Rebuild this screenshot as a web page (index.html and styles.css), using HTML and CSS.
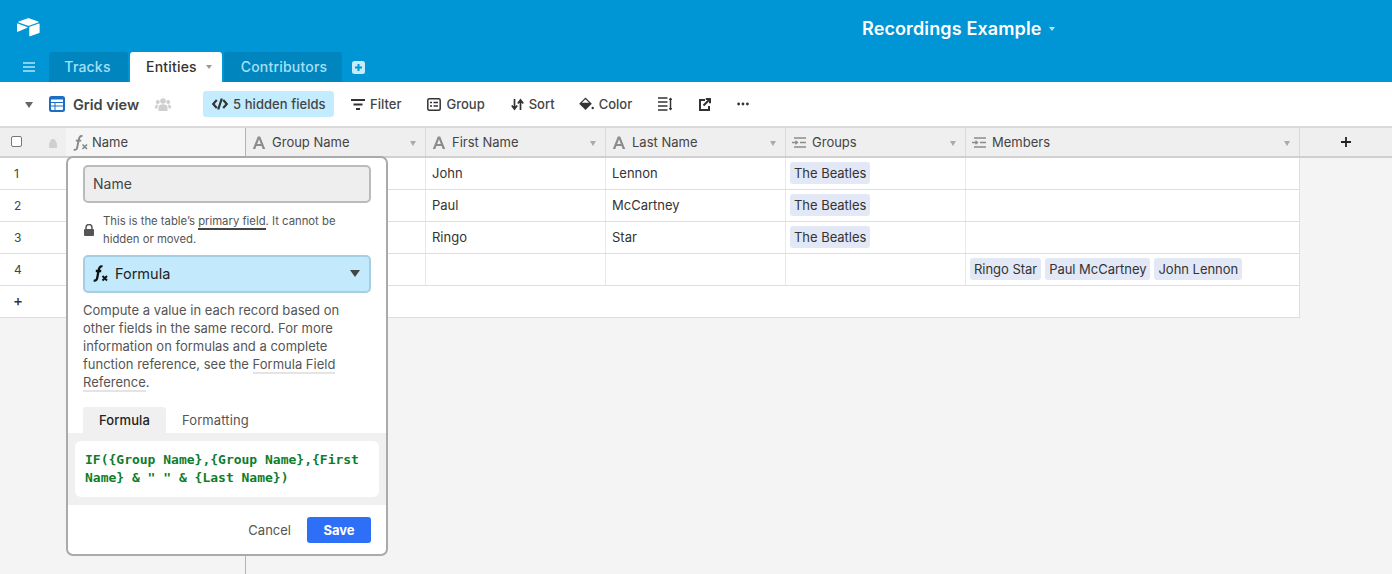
FILE: index.html
```html
<!DOCTYPE html>
<html lang="en">
<head>
<meta charset="utf-8">
<title>Recordings Example</title>
<link rel="stylesheet" href="styles.css">
</head>
<body>
<header class="appbar">
  <div class="titlebar">
    <svg class="logo" width="23" height="19" viewBox="0 0 24 22" preserveAspectRatio="none"><path d="M10.600.5 1.800 4.100c-.5.2-.5.9 0 1.100l8.900 3.500c.8.300 1.700.3 2.500 0l8.900-3.500c.5-.2.5-.9 0-1.100L13.300.5c-.8-.3-1.900-.3-2.700 0z" fill="#fff"/><path d="M12.800 10.800v9.800c0 .5.500.8.900.6l9.500-3.700c.3-.1.400-.3.400-.6V7.100c0-.5-.5-.8-.9-.6l-9.500 3.700c-.3.100-.4.300-.4.600z" fill="#fff"/><path d="M10.700 11.200 1 15.900c-.4.200-1-.1-1-.6V6.800c0-.2.100-.3.200-.4.100-.1.300-.2.500-.1l10 4c.5.200.5.700 0 .9z" fill="#fff"/></svg>
    <div class="basename">Recordings Example<span class="tricaret"></span></div>
  </div>
  <nav class="tabbar">
    <svg class="burger" width="12" height="10" viewBox="0 0 12 10"><path d="M0 1h12M0 5h12M0 9h12" stroke="#b5e5f8" stroke-width="1.600"/></svg>
    <div class="tab tab-first">Tracks</div>
    <div class="tab tab-active">Entities<span class="tab-caret"></span></div>
    <div class="tab tab-wide">Contributors</div>
    <svg class="addtab" width="13" height="13" viewBox="0 0 13 13"><rect width="13" height="13" rx="2.500" fill="#c4ecfb"/><path d="M6.500 3v7M3 6.500h7" stroke="#0095d5" stroke-width="2"/></svg>
  </nav>
</header>

<section class="toolbar">
  <span class="viewcaret"></span>
  <svg class="gridicon" width="16" height="16" viewBox="0 0 16 16"><rect width="16" height="16" rx="2.500" fill="#1a6fc4"/><path d="M2 3.500h12v2.500H2zM2 7h3.500v2.500H2zM6.500 7H14v2.500H6.500zM2 10.500h3.500V14H3a1 1 0 0 1-1-1zM6.500 10.500H14V13a1 1 0 0 1-1 1H6.500z" fill="#fff"/></svg>
  <span class="viewname">Grid view</span>
  <svg class="people" width="16" height="13" viewBox="0 0 16 13"><g fill="#cfcfcf"><circle cx="8" cy="3" r="2.800"/><circle cx="2.800" cy="4" r="2"/><circle cx="13.200" cy="4" r="2"/><path d="M3.500 13V9c0-1.800 2-2.800 4.500-2.800S12.500 7.200 12.500 9v4z"/><path d="M0 10.500V8.500C0 7.200 1.200 6.500 2.800 6.500l.6 0C2.800 7.200 2.500 8 2.500 9v1.500zM16 10.500V8.500c0-1.300-1.200-2-2.800-2l-.6 0c.6.700.9 1.500.9 2.500v1.500z"/></g></svg>
  <button class="tool tool-hidden">
    <svg width="16" height="12" viewBox="0 0 16 12"><path d="M4.800 2 1.200 6l3.600 4M11.200 2l3.600 4-3.600 4M9.800.5 6.200 11.500" fill="none" stroke="#333" stroke-width="2.200"/></svg>
    5 hidden fields
  </button>
  <button class="tool tool-filter">
    <svg width="14" height="11" viewBox="0 0 14 11"><path d="M0 1h14M2.500 5.500h9M5 10h4" stroke="#333" stroke-width="2"/></svg>
    Filter
  </button>
  <button class="tool tool-group">
    <svg width="14" height="13" viewBox="0 0 14 13"><rect x=".8" y=".8" width="12.400" height="11.400" rx="1.500" fill="none" stroke="#333" stroke-width="1.500"/><path d="M3 4.500h2M6.500 4.500h4.500M3 8h2M6.500 8h4.500" stroke="#333" stroke-width="1.500"/></svg>
    Group
  </button>
  <button class="tool tool-sort">
    <svg width="13" height="13" viewBox="0 0 13 13"><path d="M3.500 1v9M.8 7.500l2.700 3.500 2.700-3.500M9.500 12V3M6.800 5.500l2.700-3.500 2.700 3.500" fill="none" stroke="#333" stroke-width="1.700"/></svg>
    Sort
  </button>
  <button class="tool tool-color">
    <svg width="15" height="14" viewBox="0 0 15 14"><path d="M6.500.5 12.800 6.800 6.500 13 .2 6.800z" fill="#333"/><path d="M2.800 5.800 6.500 2.200l3.600 3.600z" fill="#fff"/><circle cx="13.700" cy="11" r="1.200" fill="#333"/></svg>
    Color
  </button>
  <button class="tool tool-height">
    <svg width="14" height="14" viewBox="0 0 14 14"><path d="M0 1h9.500M0 5h9.500M0 9h9.500M0 13h9.500" stroke="#333" stroke-width="1.400"/><path d="M12.500 1v12" stroke="#333" stroke-width="1.500"/><path d="M10.700 3 12.500.5 14.300 3zM10.700 11l1.800 2.500 1.800-2.500z" fill="#333"/></svg>
  </button>
  <button class="tool tool-share">
    <svg width="12" height="13" viewBox="0 0 12 13"><path d="M6 2H1v10h9V8" fill="none" stroke="#333" stroke-width="2"/><path d="M4.500 7.500 10 2M6.800 1H11v4.200" fill="none" stroke="#333" stroke-width="2"/></svg>
  </button>
  <button class="tool">
    <svg width="12" height="4" viewBox="0 0 12 4"><circle cx="1.600" cy="2" r="1.400" fill="#333"/><circle cx="6" cy="2" r="1.400" fill="#333"/><circle cx="10.400" cy="2" r="1.400" fill="#333"/></svg>
  </button>
</section>

<main class="table">
  <div class="pane-left">
    <div class="headrow headrow-left">
      <div class="corner"><span class="checkbox"></span><svg class="lock-h" width="8" height="9" viewBox="0 0 8 9"><path d="M1.500 4V2.800a2.500 2.500 0 0 1 5 0V4M.3 4h7.400v5H.3z" fill="#cfcfcf" stroke="#cfcfcf" stroke-width=".8"/></svg></div>
      <div class="hcell hcell-primary">
        <svg class="fx" width="15" height="16" viewBox="0 0 15 16"><path d="M9.500 1.200C7 .5 6.200 2.300 5.700 5L4.200 12.500c-.4 2-1.500 2.700-3.500 2.200M2.800 5.600h5.400" fill="none" stroke="#888" stroke-width="1.900"/><path d="M9.500 9.500l4.500 4.500M14 9.500 9.500 14" stroke="#888" stroke-width="1.700"/></svg>
        Name
      </div>
    </div>
    <div class="row row-left"><div class="num">1</div><div class="cell"></div></div>
    <div class="row row-left"><div class="num">2</div><div class="cell"></div></div>
    <div class="row row-left"><div class="num">3</div><div class="cell"></div></div>
    <div class="row row-left"><div class="num">4</div><div class="cell"></div></div>
    <div class="row row-left row-add"><div class="num num-plus">+</div><div class="cell"></div></div>
  </div>

  <div class="pane-right">
    <div class="headrow grid-cols">
      <div class="hcell"><svg class="a-icon" width="14" height="13" viewBox="0 0 14 13"><path d="M.8 13 5.800.5h2.400L13.200 13h-2.500L9.600 10H4.400l-1.100 3zM5.200 8h3.600L7 3.200z" fill="#8c8c8c"/></svg>Group Name<span class="hcaret"></span></div>
      <div class="hcell"><svg class="a-icon" width="14" height="13" viewBox="0 0 14 13"><path d="M.8 13 5.800.5h2.400L13.200 13h-2.500L9.600 10H4.400l-1.100 3zM5.200 8h3.600L7 3.200z" fill="#8c8c8c"/></svg>First Name<span class="hcaret"></span></div>
      <div class="hcell"><svg class="a-icon" width="14" height="13" viewBox="0 0 14 13"><path d="M.8 13 5.800.5h2.400L13.200 13h-2.500L9.600 10H4.400l-1.100 3zM5.200 8h3.600L7 3.200z" fill="#8c8c8c"/></svg>Last Name<span class="hcaret"></span></div>
      <div class="hcell"><svg class="link-icon" width="14" height="11" viewBox="0 0 14 11"><path d="M2 1h12M8 5.500h6M2 10h12M0 5.500h5M3.500 3.800 5.500 5.500 3.500 7.200" fill="none" stroke="#8c8c8c" stroke-width="1.300"/></svg>Groups<span class="hcaret"></span></div>
      <div class="hcell"><svg class="link-icon" width="14" height="11" viewBox="0 0 14 11"><path d="M2 1h12M8 5.500h6M2 10h12M0 5.500h5M3.500 3.800 5.500 5.500 3.500 7.200" fill="none" stroke="#8c8c8c" stroke-width="1.300"/></svg>Members<span class="hcaret"></span></div>
      <div class="hadd"><svg width="10" height="10" viewBox="0 0 10 10"><path d="M5 0v10M0 5h10" stroke="#222" stroke-width="1.800"/></svg></div>
    </div>
    <div class="row grid-cols"><div class="cell"></div><div class="cell">John</div><div class="cell">Lennon</div><div class="cell"><span class="pill">The Beatles</span></div><div class="cell"></div></div>
    <div class="row grid-cols"><div class="cell"></div><div class="cell">Paul</div><div class="cell">McCartney</div><div class="cell"><span class="pill">The Beatles</span></div><div class="cell"></div></div>
    <div class="row grid-cols"><div class="cell"></div><div class="cell">Ringo</div><div class="cell">Star</div><div class="cell"><span class="pill">The Beatles</span></div><div class="cell"></div></div>
    <div class="row grid-cols"><div class="cell"></div><div class="cell"></div><div class="cell"></div><div class="cell"></div><div class="cell"><span class="pill">Ringo Star</span><span class="pill">Paul McCartney</span><span class="pill">John Lennon</span></div></div>
    <div class="row grid-cols grid-add"><div class="cell-blank"></div></div>
  </div>

  <aside class="popup">
    <div class="popup-body">
      <div class="namefield">Name</div>
      <div class="primary-note">
        <svg width="10" height="12" viewBox="0 0 10 12"><path d="M2 5.500V3.500a3 3 0 0 1 6 0v2" fill="none" stroke="#555" stroke-width="1.500"/><rect y="5" width="10" height="7" rx="1" fill="#555"/></svg>
        <p>This is the table’s <span class="ul-dark">primary field</span>. It cannot be hidden or moved.</p>
      </div>
      <div class="typeselect">
        <svg width="15" height="17" viewBox="0 0 15 17"><path d="M9.500 1.500C7 .8 6.200 2.500 5.600 5.500L4.200 13c-.4 2-1.500 3-3.500 2.400M2.800 6h5.400" fill="none" stroke="#111" stroke-width="2.300"/><path d="M9.500 11l4.500 4.500M14 11l-4.500 4.500" stroke="#111" stroke-width="1.900"/></svg>
        <span>Formula</span>
        <span class="select-caret"></span>
      </div>
      <p class="desc">Compute a value in each record based on other fields in the same record. For more information on formulas and a complete function reference, see the <span class="ul-light">Formula Field Reference</span>.</p>
      <div class="ptabs"><div class="ptab ptab-active">Formula</div><div class="ptab">Formatting</div></div>
    </div>
    <div class="editorwrap"><div class="editor">IF({Group Name},{Group Name},{First Name} &amp; " " &amp; {Last Name})</div></div>
    <div class="popup-foot"><span class="cancel">Cancel</span><button class="save">Save</button></div>
  </aside>
</main>
</body>
</html>
```
FILE: styles.css
```css
* { box-sizing: border-box; }
html, body { margin: 0; height: 100%; overflow: hidden; }
body { font-family: Inter, "Liberation Sans", sans-serif; font-size: 13px; color: #333; background: #f4f4f4; display: flex; flex-direction: column; height: 574px; }
p { margin: 0; }
button { font: inherit; border: 0; background: none; padding: 0; color: inherit; }

.appbar { background: #0095d5; height: 82px; flex: none; display: flex; flex-direction: column; }
.titlebar { height: 52px; display: flex; align-items: center; padding-left: 17px; }
.logo { margin-top: 3px; flex: none; }
.basename { margin-left: 822px; margin-top: 4px; color: #fff; font-size: 18px; font-weight: 600; letter-spacing: .13px; display: flex; align-items: center; }
.tricaret { margin-left: 7px; margin-top: 2px; border: 3.500px solid transparent; border-top: 4px solid #b5e5f8; border-bottom: 0; }

.tabbar { height: 30px; display: flex; align-items: stretch; padding-left: 23px; }
.burger { align-self: center; margin-right: 14px; }
.tab { width: 79px; margin-right: 2px; padding-bottom: 1px; background: #0085be; color: #a6e0f7; font-size: 14px; font-weight: 500; letter-spacing: .2px; display: flex; align-items: center; justify-content: center; border-radius: 3px 3px 0 0; }
.tab-first { padding-right: 2px; }
.tab-active { width: 92px; background: #fff; color: #333; justify-content: flex-start; padding-left: 16px; }
.tab-wide { width: 118px; padding-left: 2px; }
.tab-caret { margin-left: 9px; border: 3.500px solid transparent; border-top: 4px solid #999; border-bottom: 0; }
.addtab { align-self: center; margin-left: 8px; }

.toolbar { height: 46px; flex: none; background: #fff; display: flex; align-items: center; padding-left: 25px; border-bottom: 2px solid #d9d9d9; }
.viewcaret { border: 4px solid transparent; border-top: 6px solid #666; border-bottom: 0; margin-top: 2px; margin-right: 16px; }
.gridicon { flex: none; }
.viewname { margin-left: 8px; font-size: 14.500px; font-weight: 600; color: #444; }
.people { margin-left: 16px; margin-right: 32px; }
.tool { display: flex; align-items: center; gap: 5px; font-weight: 500; color: #444; margin-right: 25px; font-size: 13px; white-space: nowrap; }
.tool-hidden { height: 26px; width: 131px; background: #c4ecff; border-radius: 3px; padding-left: 9px; margin-right: 17px; letter-spacing: .05px; }
.tool-filter { margin-right: 26px; }
.tool-group { margin-right: 26px; }
.tool-sort { margin-right: 24px; }
.tool-color { margin-right: 26px; }
.tool-height { margin-right: 27px; }
.tool-share { margin-right: 26px; }

.table { position: relative; flex: 1; display: flex; min-height: 0; }
.pane-left { width: 246px; flex: none; border-right: 1px solid #b4b4b4; }
.pane-right { flex: 1; min-width: 0; }
.headrow { height: 30px; background: #efefef; border-bottom: 2px solid #d0d0d0; }
.headrow-left { display: flex; }
.grid-cols { display: grid; grid-template-columns: 180px 180px 180px 180px 334px; }
.headrow.grid-cols { grid-template-columns: 180px 180px 180px 180px 334px 92px; }
.corner { width: 66px; display: flex; align-items: center; padding-left: 11px; background: #efefef; }
.checkbox { width: 11px; height: 11px; border: 1px solid #777; border-radius: 2px; background: #fff; margin-top: -2px; }
.lock-h { margin-left: 27px; margin-top: 2px; }
.hcell { position: relative; display: flex; align-items: center; padding-left: 6px; border-right: 1px solid #d9d9d9; color: #444; font-size: 13px; }
.hcell-primary { flex: 1; padding-left: 7px; background: #f5f5f5; border-right: 0; }
.fx { margin-right: 4px; margin-top: 2px; }
.a-icon { margin-right: 6px; }
.link-icon { margin-right: 6px; }
.hcaret { position: absolute; right: 9px; top: 13px; border: 3.500px solid transparent; border-top: 5px solid #aaa; border-bottom: 0; }
.hadd { display: flex; align-items: center; justify-content: center; }

.row { height: 32px; border-bottom: 1px solid #dedede; }
.row-left { display: flex; background: #fff; }
.num { width: 66px; display: flex; align-items: center; padding-left: 14px; font-size: 12px; color: #444; }
.num-plus { font-size: 15px; font-weight: 500; color: #333; padding-left: 13px; padding-bottom: 2px; }
.row.grid-cols { width: 1054px; }
.cell { display: flex; align-items: center; gap: 4px; padding: 0 4px 1px 6px; background: #fff; border-right: 1px solid #e8e8e8; font-size: 13px; color: #333; white-space: nowrap; }
.row-left .cell { flex: 1; border-right: 0; }
.cell .pill:first-child { margin-left: -2px; }
.row:nth-child(n) .cell:last-child { border-right: 1px solid #dedede; }
.grid-add { background: #fff; border-right: 1px solid #dedede; }
.pill { background: #e3e8f6; border-radius: 3px; height: 22px; line-height: 22px; padding: 0 4px; color: #333; letter-spacing: -.03px; }

.popup { position: absolute; left: 66px; top: 28px; width: 322px; height: 400px; background: #fff; border: 2px solid #aaa; border-radius: 7px; display: flex; flex-direction: column; overflow: hidden; }
.popup-body { padding: 7px 15px 0; flex: none; }
.namefield { height: 38px; background: #eee; border: 2px solid #bbb; border-radius: 5px; display: flex; align-items: center; padding: 0 0 2px 8px; font-size: 14px; color: #444; }
.primary-note { display: flex; align-items: center; gap: 9px; margin-top: 9px; padding-left: 1px; }
.primary-note p { font-size: 11.300px; line-height: 18px; color: #555; width: 255px; }
.ul-dark { border-bottom: 2px solid #444; }
.typeselect { height: 38px; margin-top: 7px; padding: 0 0 1px 8px; background: #c3e9fc; border: 2px solid #a4cfe2; border-radius: 5px; display: flex; align-items: center; gap: 7px; font-size: 14.500px; color: #222; }
.select-caret { margin-left: auto; margin-right: 9px; border: 5px solid transparent; border-top: 7px solid #444; border-bottom: 0; }
.desc { margin-top: 8px; line-height: 18px; font-size: 13px; color: #555; }
.ul-light { border-bottom: 2px solid #e4e4e4; }
.ptabs { display: flex; margin-top: 16px; height: 26px; }
.ptab { padding: 0 16px; display: flex; align-items: center; font-size: 13px; color: #555; letter-spacing: .1px; }
.ptab-active { background: #f0f0f0; color: #222; font-weight: 500; border-radius: 3px 3px 0 0; width: 83px; padding: 0; justify-content: center; }
.editorwrap { background: #f0f0f0; padding: 8px 7px; flex: none; }
.editor { background: #fff; border-radius: 6px; height: 56px; padding: 10px; font-family: "DejaVu Sans Mono", "Liberation Mono", monospace; font-weight: 700; font-size: 13px; line-height: 18px; color: #0f7c2b; }
.popup-foot { flex: 1; display: flex; align-items: center; justify-content: flex-end; gap: 16px; padding: 0 15px; }
.cancel { font-size: 13px; color: #555; }
.save { width: 64px; height: 26px; background: #2d6ff7; color: #fff; font-weight: 700; border-radius: 3px; font-size: 13px; }
```
